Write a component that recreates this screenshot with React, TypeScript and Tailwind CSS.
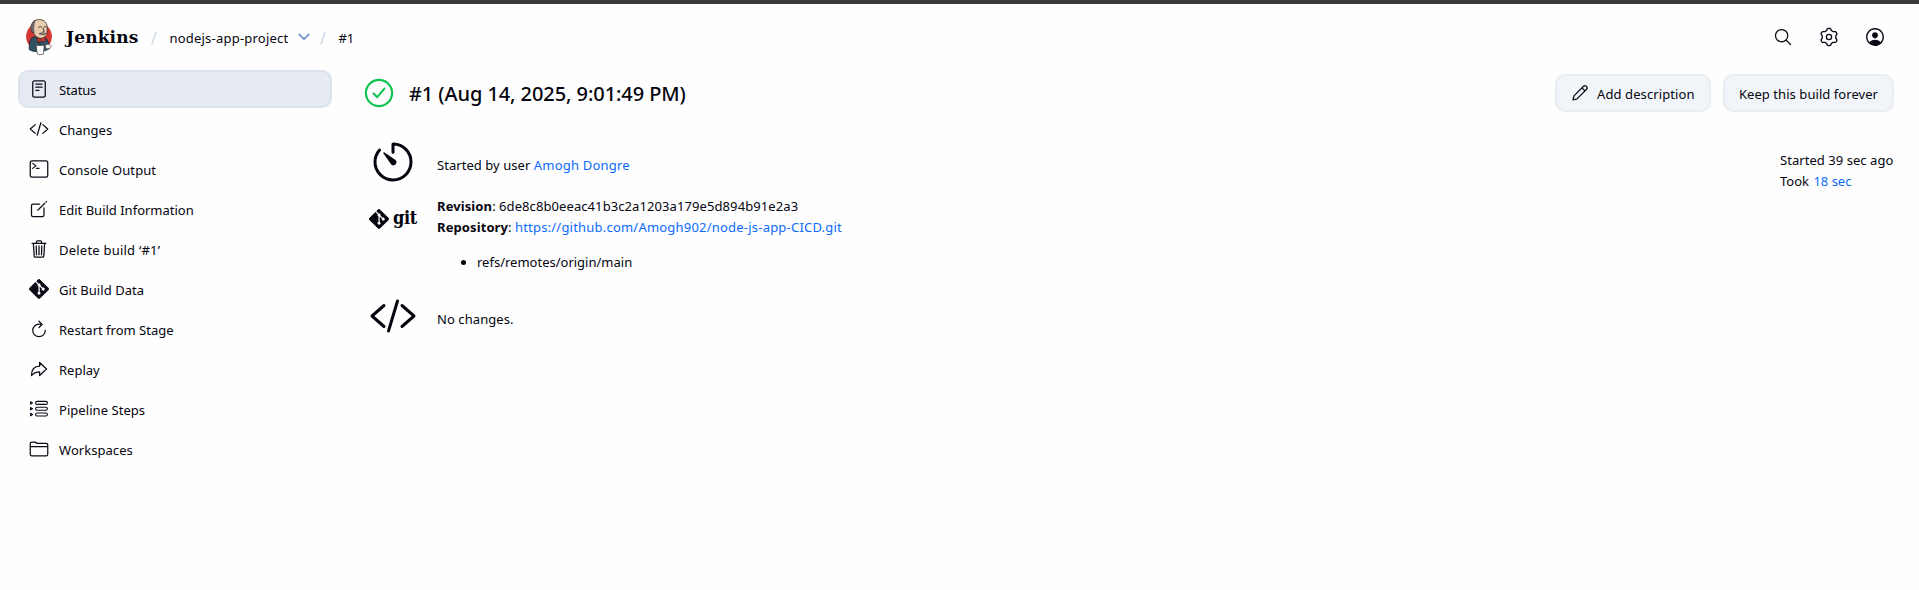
import React from 'react';
import {
  IoArrowRedoOutline,
  IoCodeSlashOutline,
  IoCreateOutline,
  IoFolderOutline,
  IoPersonCircleOutline,
  IoReaderOutline,
  IoRefreshOutline,
  IoSearchOutline,
  IoTerminalOutline,
  IoTimerOutline,
  IoTrashOutline,
} from 'react-icons/io5';
import { SiGit } from 'react-icons/si';

function StepsIcon() {
  return (
    <svg viewBox="0 0 22 22" fill="none" stroke="currentColor" strokeWidth="1.1" className="size-[22px] shrink-0">
      {[4.9, 10.7, 16.5].map((y) => (
        <g key={y}>
          <rect x="7.6" y={y - 1.5} width="11.8" height="3" rx="1.4" />
          <path d={`M2.6 ${y - 1.2}L4.5 ${y}L2.6 ${y + 1.2}Z`} strokeLinejoin="round" />
        </g>
      ))}
    </svg>
  );
}

function PencilIcon() {
  return (
    <svg viewBox="0 0 18 18" fill="none" stroke="currentColor" strokeWidth="1.2" strokeLinejoin="round" className="size-[18px]">
      <path d="M2 16L3 11.9L12.3 2.5C13.2 1.6 14.5 1.6 15.4 2.4C16.3 3.3 16.3 4.6 15.4 5.5L6 14.9Z" />
      <path d="M11 3.9L14 6.9" />
    </svg>
  );
}

function GearIcon() {
  const points = Array.from({ length: 120 }, (_, i) => {
    const a = (i / 120) * Math.PI * 2;
    const r = 7.65 - 1.0 * Math.tanh(1.8 * Math.cos(6 * a));
    return `${(10 + r * Math.cos(a)).toFixed(2)},${(10 + r * Math.sin(a)).toFixed(2)}`;
  }).join(' ');
  return (
    <svg viewBox="0 0 20 20" fill="none" stroke="currentColor" strokeWidth="1.35" className="size-5">
      <polygon points={points} strokeLinejoin="round" />
      <circle cx="10" cy="10" r="2.6" />
    </svg>
  );
}

function JenkinsLogo() {
  return (
    <svg viewBox="0 0 26 36" className="h-9 w-[26px]">
      <ellipse cx="13" cy="17.5" rx="12.9" ry="13.5" fill="#d33833" />
      <path d="M3.2 30.5C3 25 3.8 20.5 6.5 18.2L12 17.5L18.5 18.2C21.5 20 23.4 24 23.6 29.5C19 33 8 34 3.2 30.5Z" fill="#335061" stroke="#16252e" strokeWidth="0.8" />
      <path d="M9.6 17.6L13.2 28L17 18Z" fill="#35434c" />
      <path d="M6 8.5C5.4 3.4 8.6 0.6 13.4 0.6C18.8 0.6 21.7 4.4 21.2 10.2C21.3 15.2 19.2 19.3 15.6 19.4C11.4 19.4 8.6 16.6 7.6 13.4C5.8 13.2 5.2 9.4 6 8.5Z" fill="#e9ccae" stroke="#3a3230" strokeWidth="0.8" />
      <path d="M5.6 13C4 8.5 4.8 3.4 9.4 1.3C7.8 3.6 8.3 5.6 7.7 7.6C7.3 9.6 7.9 11.6 8.2 13.8Z" fill="#6d6b6d" stroke="#2b2526" strokeWidth="0.5" />
      <path d="M12.6 8.2C13.6 7.4 14.8 7.5 15.6 8.1M18 8C18.8 7.4 19.8 7.5 20.4 8M17 9.2L18.3 12.1L16.8 12.7M13.6 14.7C15.2 13.7 17.6 13.7 19.4 14.5C18.3 15.6 16 15.9 13.6 14.7Z" fill="none" stroke="#3a3230" strokeWidth="0.9" strokeLinecap="round" />
      <path d="M11.4 18.3L14.6 20.4L18.6 17.8L19.1 22.6L15.2 21.8L12 23.2Z" fill="#d33833" stroke="#6b1513" strokeWidth="0.5" />
      <path d="M19.4 26.2C21.6 24.8 24.6 25.2 25.3 27C25.6 28.8 23.5 30 20 29.6Z" fill="#f5f3f0" stroke="#4a4444" strokeWidth="0.6" />
      <path d="M10.2 26.6L18.2 26.4L17.4 35.1C15.4 35.7 12.8 35.7 11.4 35.1Z" fill="#ffffff" stroke="#4a4444" strokeWidth="0.7" />
    </svg>
  );
}

const tasks: { label: string; tracking: string; icon: React.ReactNode }[] = [
  { label: 'Status', tracking: 'tracking-[-0.15px]', icon: <IoReaderOutline /> },
  { label: 'Changes', tracking: 'tracking-normal', icon: <IoCodeSlashOutline /> },
  { label: 'Console Output', tracking: 'tracking-[0.09px]', icon: <IoTerminalOutline /> },
  { label: 'Edit Build Information', tracking: 'tracking-normal', icon: <IoCreateOutline /> },
  { label: 'Delete build ‘#1’', tracking: 'tracking-[0.22px]', icon: <IoTrashOutline /> },
  { label: 'Git Build Data', tracking: 'tracking-[0.07px]', icon: <SiGit /> },
  { label: 'Restart from Stage', tracking: 'tracking-normal', icon: <IoRefreshOutline /> },
  { label: 'Replay', tracking: 'tracking-normal', icon: <IoArrowRedoOutline /> },
  { label: 'Pipeline Steps', tracking: 'tracking-[0.05px]', icon: <StepsIcon /> },
  { label: 'Workspaces', tracking: 'tracking-[0.05px]', icon: <IoFolderOutline /> },
];

function Sidebar() {
  return (
    <nav className="flex w-[314px] shrink-0 flex-col gap-0.5">
      {tasks.map((task, i) => (
        <a
          key={task.label}
          className={`flex h-[38px] items-center gap-[9px] rounded-[10px] border-2 pl-[8px] ${
            i === 0 ? 'border-[#dde3ec] bg-[#e6eaf2]' : 'border-transparent'
          }`}
        >
          <span className="flex size-[22px] items-center justify-center text-[20px] text-[#0b0b18]">{task.icon}</span>
          <span className={`pt-0.5 ${task.tracking}`}>{task.label}</span>
        </a>
      ))}
    </nav>
  );
}

function Slash({ className }: { className: string }) {
  return (
    <svg viewBox="0 0 6 14" className={`h-3.5 w-1.5 ${className}`}>
      <path d="M5.2 0.8L0.8 13.2" stroke="#cfd9e6" strokeWidth="1.5" />
    </svg>
  );
}

function Header() {
  return (
    <header className="flex h-[66px] items-center justify-between pr-[34px] pl-[26px]">
      <div className="flex h-9 items-center">
        <JenkinsLogo />
        <span className="ml-[14px] font-['DejaVu_Serif'] text-[17px] leading-6 font-bold tracking-[0.15px] text-[#05050f]">Jenkins</span>
        <Slash className="mt-0.5 ml-[13px]" />
        <span className="mt-0.5 ml-[12px] tracking-[0.22px]">nodejs-app-project</span>
        <svg viewBox="0 0 12 8" fill="none" className="ml-[10px] h-2 w-3">
          <path d="M1.2 1.4L6 6.2L10.8 1.4" stroke="#6f93c4" strokeWidth="1.7" strokeLinecap="round" strokeLinejoin="round" />
        </svg>
        <Slash className="mt-0.5 ml-[10px]" />
        <span className="mt-0.5 ml-[12px] tracking-[-0.2px]">#1</span>
      </div>
      <div className="flex items-center gap-[26px] text-xl text-[#0b0b18]">
        <IoSearchOutline />
        <GearIcon />
        <IoPersonCircleOutline className="-mx-px size-[22px]" />
      </div>
    </header>
  );
}

function Title() {
  return (
    <div className="flex h-[38px] items-center justify-between">
      <div className="flex items-center">
        <svg viewBox="0 0 30 30" fill="none" stroke="#12c252" className="size-[30px]">
          <circle cx="15" cy="15" r="13.1" strokeWidth="2.2" />
          <path d="M9.6 15.6L13.2 19.2L20.4 10.6" strokeWidth="2.1" strokeLinecap="round" strokeLinejoin="round" />
        </svg>
        <h1 className="ml-[15px] pt-px text-xl leading-7 font-medium tracking-[-0.08px]">#1 (Aug 14, 2025, 9:01:49 PM)</h1>
      </div>
      <div className="flex gap-3">
        <button className="flex h-[38px] w-[156px] items-center rounded-[10px] border-2 border-[#e8edf1] bg-[#f1f4f8] pl-[14px]">
          <PencilIcon />
          <span className="ml-[8px] pt-0.5 tracking-[0.1px]">Add description</span>
        </button>
        <button className="flex h-[38px] w-[171px] items-center justify-center rounded-[10px] border-2 border-[#e8edf1] bg-[#f1f4f8]">
          <span className="pt-0.5 tracking-[0.06px]">Keep this build forever</span>
        </button>
      </div>
    </div>
  );
}

function Summary() {
  return (
    <div className="mt-[26px] flex justify-between">
      <div className="grid grid-cols-[58px_1fr] gap-x-[15px]">
        <div className="flex h-[58px] justify-center">
          <IoTimerOutline className="size-12 text-[#05050f]" />
        </div>
        <p className="pt-[17px] tracking-[0.05px]">
          Started by user <a className="tracking-[0.2px] text-[#0b6aff]">Amogh Dongre</a>
        </p>
        <div className="flex h-[94px] items-start justify-center gap-1 pt-[12px] text-[#05050f]">
          <SiGit className="mt-px size-5" />
          <span className="font-['DejaVu_Serif_Condensed'] text-[18px] leading-5 font-bold tracking-[-0.3px]">git</span>
        </div>
        <div>
          <p>
            <b className="tracking-[0.1px]">Revision</b>: <span className="tracking-[0.09px]">6de8c8b0eeac41b3c2a1203a179e5d894b91e2a3</span>
          </p>
          <p>
            <b className="tracking-[0.1px]">Repository</b>:{' '}
            <a className="tracking-[0.21px] text-[#0b6aff]">https://github.com/Amogh902/node-js-app-CICD.git</a>
          </p>
          <ul className="mt-[14px] ml-10 list-disc">
            <li>refs/remotes/origin/main</li>
          </ul>
        </div>
        <div className="flex justify-center pt-[2px]">
          <IoCodeSlashOutline className="size-12 shrink-0 text-[#05050f]" />
        </div>
        <p className="pt-[19px] tracking-[0.08px]">No changes.</p>
      </div>
      <div className="w-[114px] pt-[12px] whitespace-nowrap">
        <p className="tracking-[0.05px]">Started 39 sec ago</p>
        <p>
          Took&nbsp;<a className="ml-px text-[#0b6aff]">18 sec</a>
        </p>
      </div>
    </div>
  );
}

export default function App() {
  return (
    <div className="flex h-[590px] flex-col bg-[#fefefe] font-['Noto_Sans',sans-serif] text-[13px] leading-[21px] text-[#05050f]">
      <div className="h-1 shrink-0 bg-[#3b3b3b]" />
      <Header />
      <div className="flex pl-[18px]">
        <Sidebar />
        <main className="flex-1 pt-1 pr-[25px] pl-[32px]">
          <Title />
          <Summary />
        </main>
      </div>
    </div>
  );
}
